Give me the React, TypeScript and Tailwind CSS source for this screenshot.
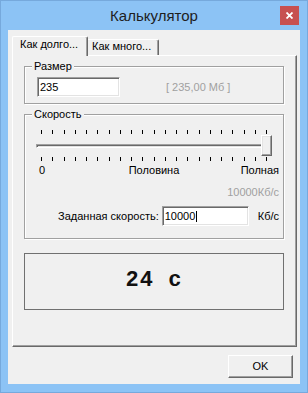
const ticks = Array.from({ length: 21 })

function TickRow() {
  return (
    <div className="ml-[16px] flex w-[226px] justify-between">
      {ticks.map((_, i) => (
        <span key={i} className="h-[4px] w-px bg-black" />
      ))}
    </div>
  )
}

function Edit({ value, className, caret }: { value: string; className: string; caret?: boolean }) {
  return (
    <div
      className={`${className} h-[20px] border border-t-[#a0a0a0] border-l-[#a0a0a0] border-r-white border-b-white bg-white pl-[2px] pt-[2px] leading-[14px] shadow-[inset_1px_1px_0_#696969,inset_-1px_-1px_0_#e3e3e3]`}
    >
      {value}
      {caret && <span className="ml-px inline-block h-[11px] w-px bg-black align-[-2px]" />}
    </div>
  )
}

export default function App() {
  return (
    <div className="h-[393px] w-[308px] border border-[#76a9dc] bg-[#8cc3f5] font-['Liberation_Sans',Arial,sans-serif] text-[11px] leading-[13px] text-black">
      {/* title bar */}
      <div className="relative flex h-[29px] items-center justify-center">
        <span className="text-[15px] leading-[18px] text-[#1e1e1e]">Калькулятор</span>
        <div className="absolute top-[5px] right-[8px] flex h-[19px] w-[19px] items-center justify-center bg-[#c75050]">
          <svg width="7" height="7" viewBox="0 0 7 7">
            <path d="M0.5 0.5 L6.5 6.5 M6.5 0.5 L0.5 6.5" stroke="#fff" strokeWidth="1.8" />
          </svg>
        </div>
      </div>

      {/* client */}
      <div className="mx-[7px] h-[354px] bg-[#f0f0f0] pt-[6px]">
        {/* tabs */}
        <div className="ml-[4px] flex h-[19px] items-end">
          <div className="relative z-10 -mb-px h-[20px] w-[76px] rounded-t-[2px] border-t border-r border-l border-t-white border-r-[#696969] border-l-white bg-[#f0f0f0] pt-[1px] pl-[7px] shadow-[inset_-1px_0_0_#a0a0a0]">
            Как долго...
          </div>
          <div className="-ml-[2px] h-[16px] w-[73px] rounded-t-[2px] border-t border-r border-l border-t-white border-r-[#696969] border-l-white bg-[#f0f0f0] pl-[5px] shadow-[inset_-1px_0_0_#a0a0a0]">
            Как много...
          </div>
        </div>

        {/* panel */}
        <div className="ml-[4px] h-[292px] w-[285px] border border-t-white border-l-white border-r-[#696969] border-b-[#696969] pt-[4px] pr-[12px] pl-[11px] shadow-[inset_-1px_-1px_0_#a0a0a0]">
          <fieldset className="border border-[#a0a0a0] shadow-[1px_1px_0_#fff,inset_1px_1px_0_#fff]">
            <legend className="ml-[7px] bg-[#f0f0f0] px-[2px] leading-[13px]">Размер</legend>
            <div className="mt-[4px] flex items-center pb-[6px] pl-[12px]">
              <Edit value="235" className="w-[83px]" />
              <span className="ml-[46px] leading-[14px] text-[#a0a0a0]">[ 235,00 Мб ]</span>
            </div>
          </fieldset>

          <fieldset className="mt-[4px] border border-[#a0a0a0] shadow-[1px_1px_0_#fff,inset_1px_1px_0_#fff]">
            <legend className="ml-[7px] bg-[#f0f0f0] px-[2px] leading-[13px]">Скорость</legend>
            <div className="pb-[12px]">
              <div className="mt-[9px]">
                <TickRow />
              </div>
              <div className="relative mt-px ml-[11px] h-[21px] w-[236px] pt-[9px]">
                <div className="h-[4px] border border-t-[#a0a0a0] border-l-[#a0a0a0] border-r-white border-b-white shadow-[inset_1px_1px_0_#696969,inset_-1px_-1px_0_#e3e3e3]" />
                <div className="absolute top-0 right-0 h-[21px] w-[11px] border border-t-white border-l-white border-r-[#696969] border-b-[#696969] bg-[#f0f0f0] shadow-[inset_-1px_-1px_0_#a0a0a0,inset_1px_1px_0_#e3e3e3]" />
              </div>
              <div className="mt-px">
                <TickRow />
              </div>
              <div className="mt-[3px] grid grid-cols-[1fr_auto_1fr]">
                <span className="pl-[14px]">0</span>
                <span>Половина</span>
                <span className="pr-[4px] text-right">Полная</span>
              </div>
              <div className="mt-[9px] pr-[4px] text-right text-[#a0a0a0]">10000Кб/с</div>
              <div className="mt-[7px] flex items-center justify-end pr-[4px]">
                <span className="leading-[14px]">Заданная скорость:</span>
                <Edit value="10000" className="ml-[3px] w-[87px]" caret />
                <span className="ml-[9px] leading-[14px]">Кб/с</span>
              </div>
            </div>
          </fieldset>

          <div className="mt-[14px] flex h-[57px] items-center justify-center border border-[#707070] pb-[2px]">
            <span className="font-['Liberation_Mono','Courier_New',monospace] text-[22px] leading-none font-bold tracking-[1px] text-[#111]">
              24 с
            </span>
          </div>
        </div>

        {/* buttons */}
        <div className="mt-[8px] flex justify-end pr-[7px]">
          <button className="h-[23px] w-[65px] border border-t-white border-l-white border-r-[#696969] border-b-[#696969] bg-[#f0f0f0] leading-[13px] shadow-[inset_-1px_-1px_0_#a0a0a0]">
            OK
          </button>
        </div>
      </div>
    </div>
  )
}
